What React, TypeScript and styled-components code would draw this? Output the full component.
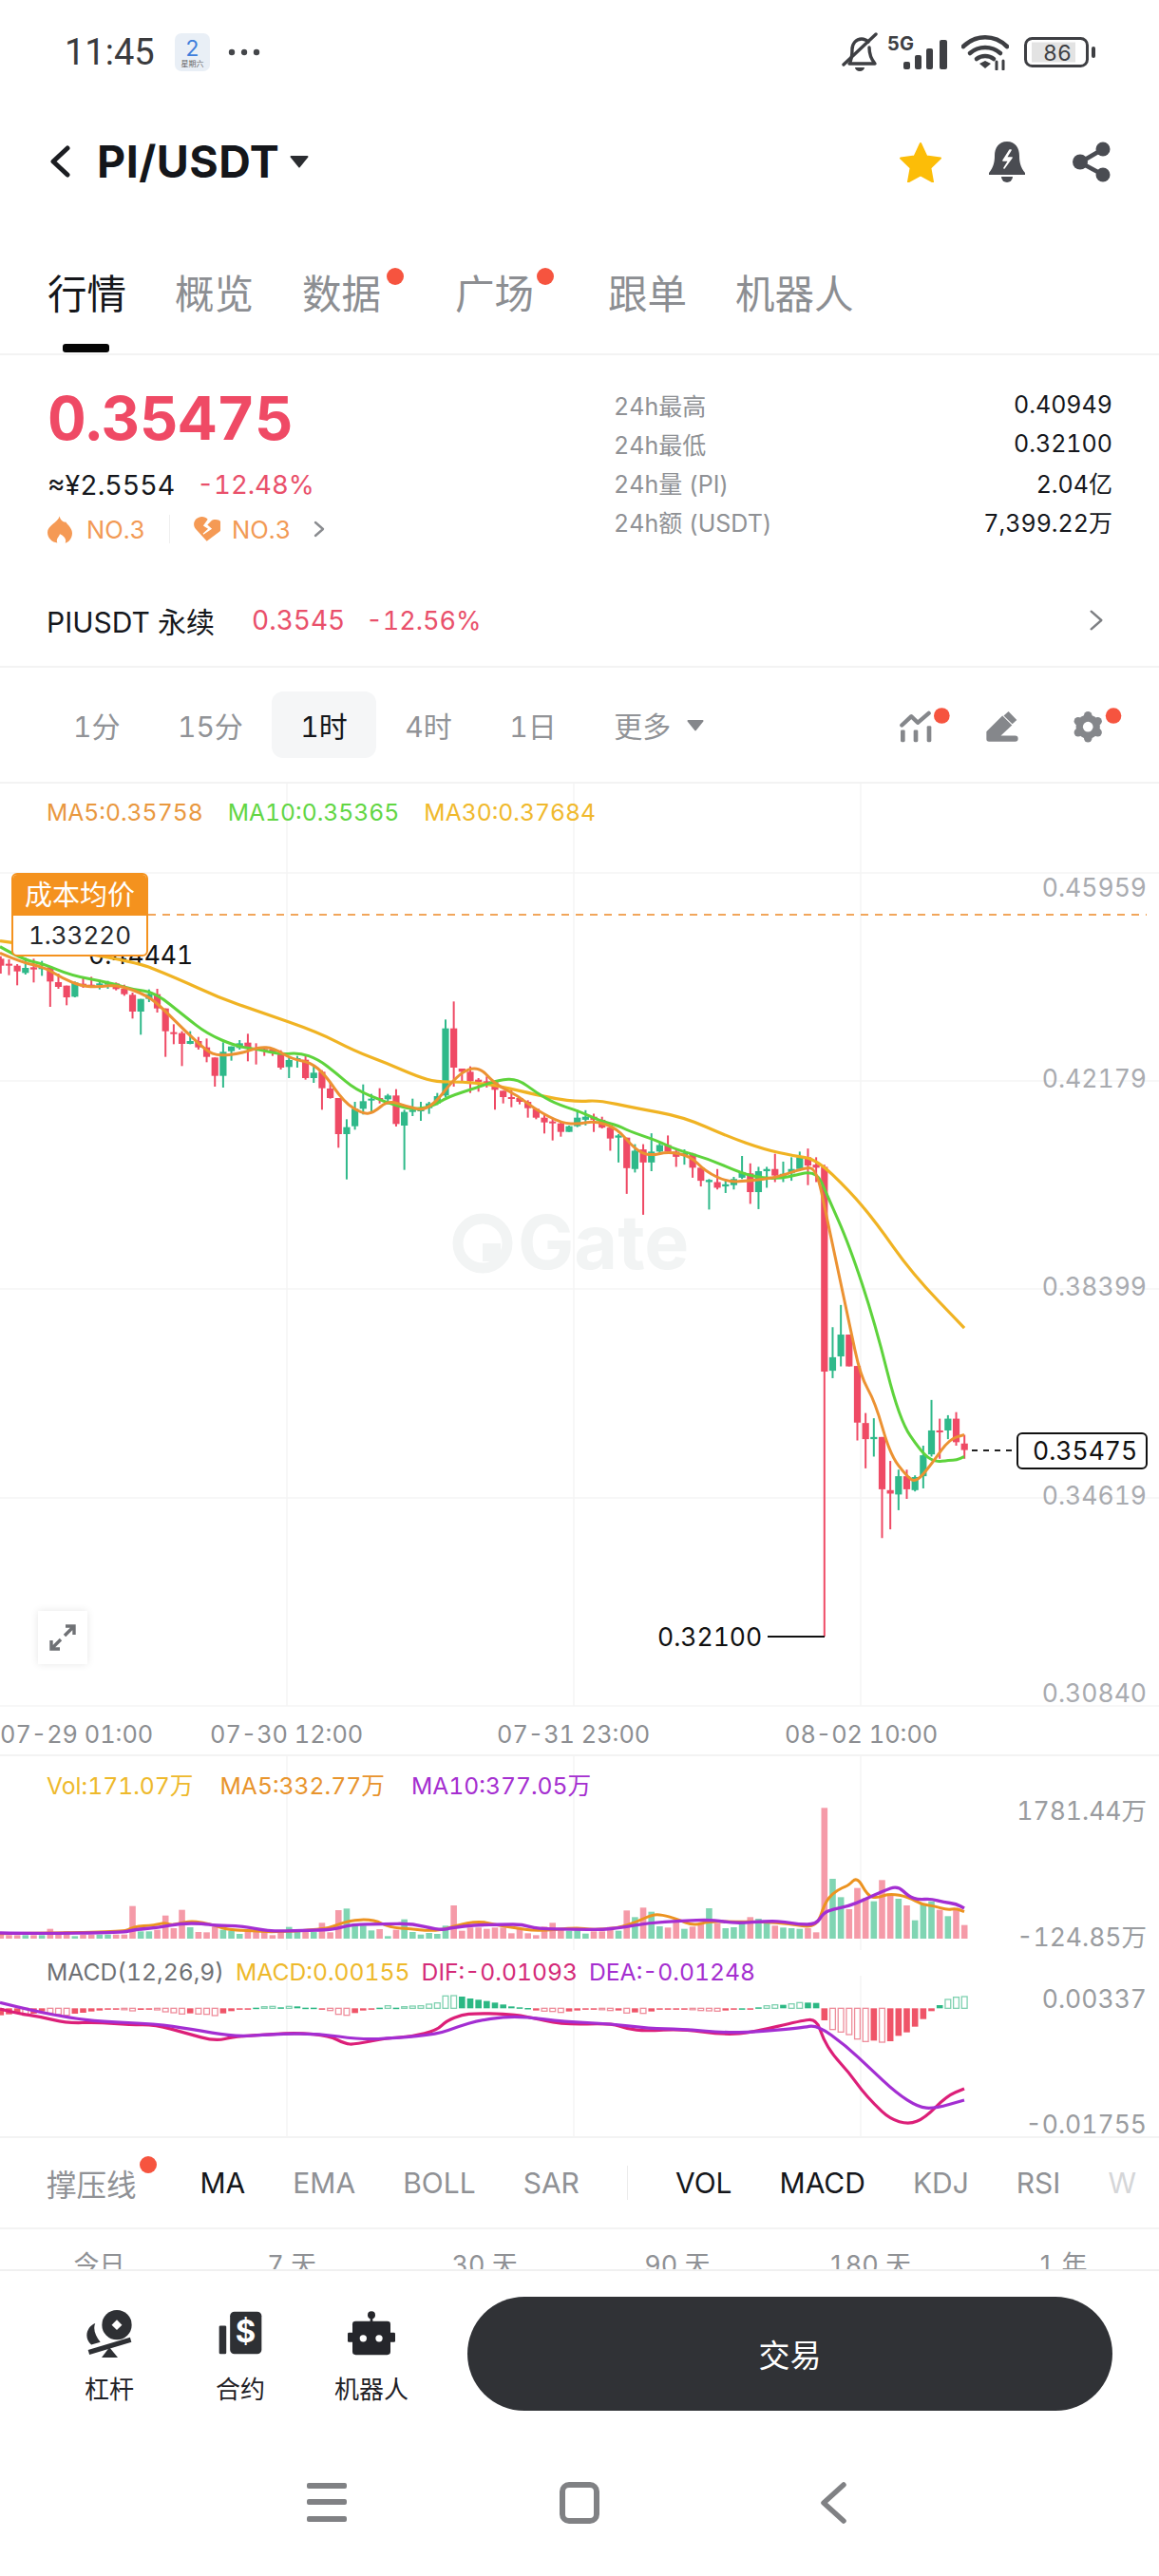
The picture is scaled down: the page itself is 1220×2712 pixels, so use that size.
import React from "react";
import styled, { createGlobalStyle } from "styled-components";

//-----------------------DATA-----------------------//

type Pt = [number, number];

// chart traces were read off two crops of the chart, so they keep the crop scale
const left = (x: number, y: number): Pt => [x / 2.57, 840 + y / 3];
const right = (x: number, y: number): Pt => [610 + x / 2.57, 1100 + y / 2.18];
const lower1 = (x: number, y: number): Pt => [x / 3, 1890 + y / 3];
const lower2 = (x: number, y: number): Pt => [510 + x / 3, 1890 + y / 3];

const candleX = (i: number) => 0.8 + 8.67 * i;

// [up, wickTop, wickBottom, bodyTop, bodyBottom]
const candlesLeft = [
  [0,500,555,508,530],[0,510,560,524,530],[0,525,592,530,548],[1,505,558,537,553],[0,508,583,535,542],[1,515,562,535,540],
  [0,535,660,535,580],[0,555,603,582,597],[0,593,655,593,630],[1,580,630,583,628],[0,570,600,587,595],[0,565,600,590,596],
  [1,575,605,586,592],[1,578,603,584,589],[0,583,608,586,604],[0,590,625,603,620],[0,615,697,622,675],[1,635,748,635,675],
  [1,605,645,620,635],[0,603,678,620,665],[0,665,818,665,737],[0,715,778,740,745],[0,737,847,743,777],[1,737,778,768,777],
  [0,755,795,768,788],[0,760,835,788,818],[0,820,912,820,878],[1,772,915,802,878],[1,785,830,785,800],[1,765,795,775,790],
  [0,745,832,773,792],[0,775,842,790,798],[0,787,815,793,800],[0,790,815,795,802],[0,797,858,805,852],[1,820,885,828,850],
  [1,815,852,822,828],[0,815,890,827,885],[1,845,900,868,885],[0,860,985,865,917],[0,900,950,918,948],[0,948,1105,948,1062],
  [1,1015,1205,1040,1062],[1,960,1048,982,1037],[1,905,1000,958,982],[1,935,990,950,956],[0,917,965,948,952],[1,935,968,940,952],
  [0,920,1038,940,1030],[1,985,1175,992,1035],[1,950,1005,985,992],[1,960,1020,980,990],[1,960,998,965,980],[1,932,970,942,965],
  [1,700,945,728,940],[0,643,912,728,852],[0,855,895,855,865],[0,848,932,865,895],[0,885,928,890,897],[0,880,915,895,900],
  [0,898,985,898,922],[0,925,965,925,945],[0,920,977,945,950],[0,945,968,948,960],[0,955,1010,960,980],[0,980,1015,982,1010],
  [0,1000,1060,1010,1025],[0,1012,1082,1022,1027],[0,1025,1070,1028,1055],[1,1035,1055,1037,1055],[1,985,1040,1010,1037],
];

const candlesRight = [
  [1,150,185,165,172],[0,158,200,165,172],[0,165,192,172,190],[0,185,243,190,215],[1,205,270,208,213],[0,213,342,213,283],
  [1,228,293,243,285],[0,228,390,240,270],[1,203,290,245,270],[1,225,250,230,245],[0,208,250,230,245],[0,240,280,245,257],
  [1,240,275,248,255],[0,248,305,250,282],[0,282,325,282,312],[1,308,378,310,315],[0,285,332,315,328],[1,310,340,320,325],
  [1,303,332,308,322],[1,255,308,292,305],[0,272,365,295,338],[1,280,377,290,338],[1,280,328,285,290],[0,250,315,285,300],
  [1,268,315,296,300],[1,258,312,285,295],[1,245,290,258,285],[0,238,322,258,277],[0,258,315,275,282],[0,275,1358,280,750],
  [1,648,765,717,748],[1,597,738,665,715],[0,665,738,665,738],[0,737,908,737,867],[0,845,972,868,905],[1,857,945,900,905],
  [0,900,1132,900,1020],[0,955,1112,1022,1030],[1,975,1068,990,1032],[0,975,1042,990,1020],[1,988,1025,992,1022],[1,920,1018,942,990],
  [1,815,945,885,940],[0,858,950,885,888],[1,850,905,858,885],[0,843,920,858,912],[0,895,950,915,930],
];

const ma30 = [
  ...[[0,452],[340,505],[480,570],[590,630],[700,675],[860,740],[960,800],[1050,840],[1130,880],[1180,897],[1250,897],[1330,905],[1430,932],[1500,950],[1568,960]].map(([x, y]) => left(x, y)),
  ...[[50,127],[150,145],[280,165],[400,210],[500,240],[580,255],[640,262],[730,335],[800,405],[900,525],[1041,650]].map(([x, y]) => right(x, y)),
];
const ma10 = [
  ...[[0,470],[60,510],[120,525],[190,560],[300,585],[360,605],[420,615],[500,690],[560,745],[640,785],[700,795],[760,810],[810,805],[860,825],[910,870],[960,920],[1040,960],[1110,985],[1170,975],[1210,945],[1290,915],[1350,890],[1400,887],[1450,930],[1500,965],[1568,990]].map(([x, y]) => left(x, y)),
  ...[[50,173],[110,187],[130,197],[210,220],[260,240],[350,262],[440,295],[500,307],[560,305],[640,287],[670,345],[730,460],[800,640],[865,860],[925,935],[960,958],[1000,953],[1020,953],[1041,945]].map(([x, y]) => right(x, y)),
];
const ma5 = [
  ...[[0,490],[60,520],[120,535],[170,570],[220,595],[270,597],[320,590],[400,625],[440,665],[500,735],[560,800],[590,815],[650,808],[700,787],[740,790],[790,825],[840,835],[880,875],[930,960],[980,998],[1010,995],[1050,955],[1100,975],[1160,990],[1240,870],[1295,847],[1340,905],[1400,940],[1450,985],[1520,1028],[1568,1030]].map(([x, y]) => left(x, y)),
  ...[[40,175],[100,190],[150,240],[190,255],[240,245],[300,255],[340,290],[400,315],[460,312],[530,305],[600,285],[640,280],[670,400],[730,640],[760,760],[800,820],[840,940],[885,990],[910,1005],[950,965],[1000,905],[1041,895]].map(([x, y]) => right(x, y)),
];

// bar tops, negative means a green bar
const volTops = [
  440,442,442,-442,442,-442,422,440,430,-445,440,440,-440,-440,440,440,350,-430,-430,425,380,420,362,-417,432,433,415,-425,-428,-438,
  428,428,430,442,432,-416,-432,432,-432,403,433,363,-358,-412,-412,-427,423,-445,425,-392,-432,-440,-435,-438,-412,348,428,418,418,422,
  418,418,436,422,436,442,415,403,425,-428,-425,-437,430,430,416,-428,364,-385,355,-368,-414,418,398,-422,415,405,-357,405,-420,-417,
  -405,385,-390,-405,412,-418,-420,-422,420,433,40,-264,-322,360,293,325,-335,268,315,-327,348,-395,-345,-335,362,-382,358,410,
];
const macdEnds = [
  695,692,690,695,690,683,688,692,695,690,687,683,680,676,676,677,681,678,676,678,684,687,691,689,691,692,696,689,682,676,
  674,671,668,667,670,667,667,671,671,675,680,692,695,688,680,675,671,665,671,668,666,665,660,656,634,633,636,642,646,650,
  655,661,667,670,672,680,682,683,686,683,680,677,675,677,680,680,688,686,689,683,677,676,675,674,677,680,681,682,680,677,
  673,677,670,665,662,662,659,655,655,656,711,740,748,756,770,778,775,780,777,760,749,731,707,682,663,645,638,636,
];

const volMa10 = [
  ...[[0,435],[100,437],[390,434],[420,425],[500,418],[570,405],[640,405],[680,412],[760,412],[850,430],[960,427],[1050,425],[1110,408],[1210,407],[1300,405],[1390,427],[1430,418],[1500,410]].map(([x, y]) => lower1(x, y)),
  ...[[60,408],[120,408],[165,422],[280,423],[370,425],[430,418],[520,403],[620,397],[720,393],[790,405],[900,397],[950,400],[990,408],[1048,408],[1070,372],[1100,360],[1150,350],[1200,330],[1260,302],[1305,286],[1340,320],[1370,330],[1410,327],[1450,338],[1490,343],[1515,357]].map(([x, y]) => lower2(x, y)),
];
const volMa5 = [
  ...[[0,437],[390,434],[420,415],[490,410],[520,402],[540,410],[570,405],[600,398],[640,402],[680,412],[720,425],[800,428],[850,432],[960,428],[1040,420],[1100,395],[1180,392],[1230,418],[1300,422],[1350,428],[1400,425],[1440,412],[1510,397]].map(([x, y]) => lower1(x, y)),
  ...[[30,408],[90,418],[165,430],[290,418],[340,425],[420,420],[480,400],[530,377],[560,377],[610,392],[660,412],[710,398],[790,400],[880,400],[960,405],[1048,420],[1075,340],[1100,310],[1130,292],[1150,285],[1177,257],[1210,318],[1240,325],[1280,310],[1340,322],[1380,345],[1420,350],[1460,362],[1490,358],[1515,368]].map(([x, y]) => lower2(x, y)),
];
const dif = [
  ...[[0,675],[60,690],[130,700],[210,720],[310,717],[410,725],[490,725],[590,752],[680,777],[740,762],[860,755],[940,750],[1040,760],[1090,785],[1120,787],[1220,767],[1300,763],[1380,742],[1410,712],[1460,693],[1500,689]].map(([x, y]) => lower1(x, y)),
  ...[[60,690],[130,698],[250,725],[400,720],[450,738],[510,745],[620,738],[760,757],[850,748],[1000,712],[1048,707],[1070,770],[1100,820],[1150,875],[1190,930],[1230,975],[1280,1022],[1340,1040],[1390,1020],[1460,950],[1515,927]].map(([x, y]) => lower2(x, y)),
];
const dea = [
  ...[[0,655],[100,680],[220,703],[320,715],[490,722],[600,738],[740,763],[860,755],[1000,752],[1140,772],[1250,767],[1380,755],[1450,730],[1510,712]].map(([x, y]) => lower1(x, y)),
  ...[[60,700],[130,700],[250,715],[400,722],[520,737],[620,738],[760,750],[850,748],[1000,735],[1050,725],[1140,790],[1220,865],[1300,940],[1370,985],[1420,990],[1515,963]].map(([x, y]) => lower2(x, y)),
];

const smooth = (pts: Pt[]) => {
  let d = `M${pts[0][0]} ${pts[0][1]}`;
  for (let i = 1; i < pts.length - 1; i++) {
    const mx = (pts[i][0] + pts[i + 1][0]) / 2;
    const my = (pts[i][1] + pts[i + 1][1]) / 2;
    d += `Q${pts[i][0]} ${pts[i][1]} ${mx} ${my}`;
  }
  const last = pts[pts.length - 1];
  return `${d}L${last[0]} ${last[1]}`;
};

const RED = "#ef4a65";
const GREEN = "#2fb98a";
const VERTICALS = [302, 604, 906];

//-----------------------STYLE-----------------------//

const FONT = `Inter, "Noto Sans CJK SC", sans-serif`;

const GlobalStyle = createGlobalStyle`
  html, body {
    margin: 0;
    padding: 0;
    background: #fff;
  }
  body {
    font-family: ${FONT};
    font-variant-numeric: tabular-nums;
  }
`;

const Page = styled.div`
  width: 1220px;
  height: 2712px;
  overflow: hidden;
  background: #fff;
  color: #15171c;
`;

const IconSlot = styled.span<{ $left?: number; $right?: number }>`
  flex: none;
  display: flex;
  align-items: center;
  margin-left: ${(p) => p.$left ?? 0}px;
  margin-right: ${(p) => p.$right ?? 0}px;
`;

const StatusBar = styled.div`
  height: 110px;
  box-sizing: border-box;
  padding: 0 66px 0 68px;
  display: flex;
  align-items: center;
  justify-content: space-between;
`;

const StatusLeft = styled.div`
  display: flex;
  align-items: center;
`;

const Clock = styled.span`
  font-family: Roboto, sans-serif;
  font-size: 38px;
  color: #3a3b3e;
  width: 116px;
`;

const StatusRight = styled.div`
  display: flex;
  align-items: center;
`;

const Header = styled.div`
  height: 120px;
  box-sizing: border-box;
  padding: 0 50px 0 52px;
  display: flex;
  align-items: center;
`;

const Symbol = styled.span`
  font-size: 46.5px;
  font-weight: 700;
  letter-spacing: 0.5px;
  margin: 0 11px 0 27px;
  color: #14161a;
`;

const HeaderIcons = styled.div`
  margin-left: auto;
  display: flex;
  align-items: center;
  gap: 49px;
`;

const Tabs = styled.div`
  height: 144px;
  box-sizing: border-box;
  padding: 56px 0 0 50px;
  display: flex;
  gap: 51px;
  border-bottom: 2px solid #f3f3f3;
`;

const Tab = styled.div<{ $active?: boolean; $dot?: boolean }>`
  position: relative;
  font-size: 41.5px;
  line-height: 48px;
  height: 48px;
  margin-right: ${(p) => (p.$dot ? "27px" : "0")};
  color: ${(p) => (p.$active ? "#14161a" : "#8c8e92")};
`;

const TabMark = styled.span`
  position: absolute;
  left: 16px;
  top: 76px;
  width: 49px;
  height: 9px;
  border-radius: 3px;
  background: #050505;
`;

const Dot = styled.span<{ $left: number; $top: number }>`
  position: absolute;
  left: ${(p) => p.$left}px;
  top: ${(p) => p.$top}px;
  width: 18px;
  height: 18px;
  border-radius: 50%;
  background: #f6543f;
`;

const Summary = styled.div`
  height: 327px;
  border-bottom: 2px solid #f3f3f3;
`;

const SummaryTop = styled.div`
  height: 231px;
  box-sizing: border-box;
  padding: 26px 49px 0 50px;
  display: flex;
  justify-content: space-between;
`;

const PriceCol = styled.div`
  display: flex;
  flex-direction: column;
`;

const Price = styled.div`
  font-size: 63px;
  font-weight: 700;
  line-height: 80px;
  letter-spacing: -0.4px;
  color: ${RED};
`;

const SubRow = styled.div`
  height: 56px;
  margin-top: 2px;
  display: flex;
  align-items: center;
  gap: 23px;
  font-size: 28.5px;
`;

const Change = styled.span`
  font-size: 27.5px;
  color: #e9506b;
`;

const RankRow = styled.div`
  height: 38px;
  display: flex;
  align-items: center;
  font-size: 25.5px;
  color: #f29a55;
`;

const RankDivider = styled.span`
  width: 1px;
  height: 30px;
  margin: 0 25px;
  background: #efefef;
`;

const StatsCol = styled.div`
  width: 525px;
  padding-top: 5px;
`;

const StatRow = styled.div`
  height: 41px;
  display: flex;
  align-items: center;
  justify-content: space-between;
  font-size: 25px;
`;

const StatLabel = styled.span`
  color: #8f9195;
`;

const PerpRow = styled.div`
  height: 96px;
  box-sizing: border-box;
  padding: 0 58px 0 49px;
  display: flex;
  align-items: center;
  font-size: 30px;
`;

const PerpPrice = styled.span`
  font-size: 28px;
  color: #e9506b;
  margin-left: 39px;
`;

const PerpChange = styled.span`
  font-size: 27px;
  color: #e9506b;
  margin-left: 22px;
  margin-right: auto;
`;

const Timeframes = styled.div`
  height: 122px;
  box-sizing: border-box;
  padding: 0 38px 0 47px;
  display: flex;
  align-items: center;
  gap: 0.5px;
  border-bottom: 2px solid #f3f3f3;
`;

const Timeframe = styled.div<{ $active?: boolean }>`
  height: 70px;
  padding: 0 30px;
  display: flex;
  align-items: center;
  font-size: 30px;
  border-radius: 12px;
  color: ${(p) => (p.$active ? "#14161a" : "#919397")};
  background: ${(p) => (p.$active ? "#f5f6f7" : "transparent")};
`;

const ToolIcons = styled.div`
  margin-left: auto;
  display: flex;
  align-items: center;
`;

const Pane = styled.div<{ $height: number; $line?: boolean }>`
  position: relative;
  height: ${(p) => p.$height}px;
  box-sizing: content-box;
  border-bottom: ${(p) => (p.$line ? "2px solid #f3f3f3" : "none")};
`;

const ChartSvg = styled.svg`
  display: block;
  width: 1220px;
  height: 100%;
`;

const AxisText = styled.text<{ $color?: string; $size?: number }>`
  font-family: ${FONT};
  font-size: ${(p) => p.$size ?? 26.5}px;
  fill: ${(p) => p.$color ?? "#a9abb0"};
`;

const Legend = styled.div<{ $top: number; $gap: number }>`
  position: absolute;
  left: 49px;
  top: ${(p) => p.$top}px;
  display: flex;
  gap: ${(p) => p.$gap}px;
  font-size: 24.7px;
  line-height: 30px;
`;

const LegendItem = styled.span<{ $color: string }>`
  color: ${(p) => p.$color};
`;

const CostTag = styled.div`
  position: absolute;
  left: 12px;
  top: 94px;
  width: 144px;
  box-sizing: border-box;
  border: 2px solid #f4921e;
  border-radius: 6px;
  background: #fff;
  overflow: hidden;
  text-align: center;
`;

const CostTitle = styled.div`
  height: 43px;
  line-height: 43px;
  font-size: 29px;
  color: #fff;
  background: #f4921e;
`;

const CostValue = styled.div`
  height: 41px;
  line-height: 41px;
  font-size: 26px;
  color: #25272b;
`;

const ExpandButton = styled.div`
  position: absolute;
  left: 40px;
  top: 871px;
  width: 52px;
  height: 56px;
  display: flex;
  align-items: center;
  justify-content: center;
  background: #fff;
  box-shadow: 0 0 8px rgba(0, 0, 0, 0.1);
`;

const Indicators = styled.div`
  height: 96px;
  box-sizing: border-box;
  padding-left: 49px;
  display: flex;
  align-items: center;
  gap: 50px;
  overflow: hidden;
  border-bottom: 2px solid #f3f3f3;
`;

const Indicator = styled.div<{ $on?: boolean; $faded?: boolean }>`
  flex: none;
  font-size: 30px;
  color: ${(p) => (p.$on ? "#14161a" : p.$faded ? "#d5d6d8" : "#8f9195")};
`;

const SupportTab = styled.div`
  position: relative;
  flex: none;
  font-size: 31.5px;
  margin-right: 17px;
  color: #8f9195;
`;

const IndicatorDivider = styled.span`
  flex: none;
  width: 1px;
  height: 36px;
  background: #ececec;
`;

const Periods = styled.div`
  height: 42px;
  box-sizing: content-box;
  padding-left: 3px;
  display: grid;
  grid-template-columns: repeat(6, 1fr);
  overflow: hidden;
  border-bottom: 2px solid #f0f0f0;
`;

const Period = styled.div`
  padding-top: 20px;
  font-size: 27px;
  line-height: 36px;
  text-align: center;
  color: #8f9195;
`;

const ActionBar = styled.div`
  height: 120px;
  margin-top: 27px;
  padding: 0 49px 0 46px;
  display: flex;
`;

const Action = styled.div`
  width: 138px;
  display: flex;
  flex-direction: column;
  align-items: center;
  padding-top: 10px;
  box-sizing: border-box;
`;

const ActionIcon = styled.div`
  height: 56px;
  display: flex;
  align-items: center;
`;

const ActionLabel = styled.div`
  margin-top: 15px;
  font-size: 26px;
  line-height: 34px;
  color: #1f2126;
`;

const TradeButton = styled.div`
  flex: 1;
  margin-left: 32px;
  border-radius: 60px;
  background: #303236;
  color: #fff;
  font-size: 33px;
  display: flex;
  align-items: center;
  justify-content: center;
`;

const NavBar = styled.div`
  padding: 75px 0 0 323px;
  display: flex;
  align-items: center;
`;

//-----------------------ICONS-----------------------//

const CalendarIcon = () => (
  <svg width="37" height="40" viewBox="0 0 37 40">
    <rect width="37" height="40" rx="7" fill="#e9eff6" />
    <AxisText x="18.5" y="24" textAnchor="middle" $size={23} $color="#3f7fdc">2</AxisText>
    <AxisText x="18.5" y="35" textAnchor="middle" $size={8} $color="#666">星期六</AxisText>
  </svg>
);

const MoreDots = () => (
  <svg width="34" height="8" viewBox="0 0 34 8">
    <circle cx="4" cy="4" r="3.2" fill="#44464a" />
    <circle cx="17" cy="4" r="3.2" fill="#44464a" />
    <circle cx="30" cy="4" r="3.2" fill="#44464a" />
  </svg>
);

const MutedBell = () => (
  <svg width="38" height="42" viewBox="0 0 38 42" fill="none" stroke="#3e3f43" strokeWidth="3.4" strokeLinecap="round" strokeLinejoin="round">
    <path d="M9 31c2-5 2-9 2-13 0-6 4-11 10-11 3 0 5 1 7 3M29 16c0 6 1 11 6 17H8" />
    <path d="M36 2 2 34" />
    <path d="M14 37h10a5 4 0 0 1-10 0z" fill="#3e3f43" stroke="none" />
  </svg>
);

const SignalIcon = () => (
  <svg width="66" height="38" viewBox="0 0 66 38">
    <AxisText x="0" y="17" $size={20} $color="#3e3f43" fontWeight="700">5G</AxisText>
    <rect x="17" y="29" width="7" height="8" rx="2" fill="#3e3f43" />
    <rect x="29" y="22" width="7" height="15" rx="2" fill="#3e3f43" />
    <rect x="41" y="15" width="7" height="22" rx="2" fill="#3e3f43" />
    <rect x="55" y="6" width="8" height="31" rx="2" fill="#3e3f43" />
  </svg>
);

const WifiIcon = () => (
  <svg width="50" height="38" viewBox="0 0 50 38" fill="none" stroke="#3e3f43" strokeWidth="4.6" strokeLinecap="round">
    <path d="M2 13C15 0 35 0 48 13" />
    <path d="M9 20c9-8 23-8 32 0" />
    <path d="M16 26c5-4 13-4 18 0" />
    <path d="M19 31l6-3 6 3-6 5z" fill="#3e3f43" stroke="none" />
    <path d="M37 37v-8M44 37v-9" strokeWidth="3" />
  </svg>
);

const BatteryIcon = () => (
  <svg width="76" height="32" viewBox="0 0 76 32">
    <rect x="1.5" y="1.5" width="65" height="29" rx="7" fill="#fff" stroke="#3e3f43" strokeWidth="3" />
    <rect x="8" y="5.5" width="46" height="21" fill="#e3e3e3" />
    <rect x="71" y="10" width="4" height="12" rx="2" fill="#3e3f43" />
    <AxisText x="35" y="25" textAnchor="middle" $size={23} $color="#3e3f43" fontFamily="Roboto">86</AxisText>
  </svg>
);

const BackIcon = () => (
  <svg width="23" height="34" viewBox="0 0 23 34" fill="none" stroke="#1b1d21" strokeWidth="5" strokeLinecap="round" strokeLinejoin="round">
    <path d="M19 3 4 17l15 14" />
  </svg>
);

const Caret = ({ w, h, color }: { w: number; h: number; color: string }) => (
  <svg width={w} height={h} viewBox="0 0 20 14">
    <path d="M1.5 1h17a1 1 0 0 1 .8 1.6L10.8 13a1 1 0 0 1-1.6 0L.7 2.6A1 1 0 0 1 1.5 1z" fill={color} />
  </svg>
);

const StarIcon = () => (
  <svg width="46" height="43" viewBox="0 0 46 43">
    <path d="M23 2l6.4 13.6 14.6 2-10.6 10.3 2.6 14.6L23 35.4l-13 7.1 2.6-14.6L2 17.6l14.6-2z" fill="#fcbd08" stroke="#fcbd08" strokeWidth="2" strokeLinejoin="round" />
  </svg>
);

const AlertBell = () => (
  <svg width="38" height="43" viewBox="0 0 38 43">
    <path d="M19 0C10 0 6 7 6 15c0 6-1 12-6 18v2h38v-2c-5-6-6-12-6-18C32 7 28 0 19 0z" fill="#4a4c52" />
    <path d="M22 9l-7 11h6l-5 8 8-11h-6l5-8z" fill="#fff" stroke="#fff" strokeWidth="1.6" strokeLinejoin="round" />
    <path d="M13 37h12a6 6 0 0 1-12 0z" fill="#4a4c52" />
  </svg>
);

const ShareIcon = () => (
  <svg width="42" height="43" viewBox="0 0 42 43" fill="#4a4c52" stroke="#4a4c52">
    <path d="M33 8 9 22l24 13" fill="none" strokeWidth="4.6" />
    <circle cx="33" cy="8" r="7.5" stroke="none" />
    <circle cx="9" cy="21.5" r="8" stroke="none" />
    <circle cx="33" cy="35" r="7.5" stroke="none" />
  </svg>
);

const FlameIcon = () => (
  <svg width="26" height="29" viewBox="30 25 78 84">
    <path d="M68 25c3 14 14 20 20 18 1 5 20 18 20 35 0 18-14 31-22 31 4-8 1-20-17-28-3 10-13 15-8 28-16-2-31-14-31-33 0-22 32-30 38-51z" fill="#f59a55" />
  </svg>
);

const HeartIcon = () => (
  <svg width="28" height="26" viewBox="488 28 82 76">
    <path d="M528 103 494 66c-14-17 0-38 19-38 8 0 13 3 18 8l-14 20 15 9-16 15 2 3 26-18-14-12 14-14c5-2 8-2 12-2 19 0 24 20 12 36z" fill="#f59a55" />
  </svg>
);

const Chevron = ({ w, h, color, sw }: { w: number; h: number; color: string; sw: number }) => (
  <svg width={w} height={h} viewBox="0 0 12 18" fill="none" stroke={color} strokeWidth={sw} strokeLinecap="round" strokeLinejoin="round">
    <path d="M2 2l8 7-8 7" />
  </svg>
);

const IndicatorTool = () => (
  <svg width="55" height="37" viewBox="45 25 165 110">
    <path d="M55 80 85 52l20 20 35-30" fill="none" stroke="#85878b" strokeWidth="13" strokeLinecap="round" strokeLinejoin="round" />
    <rect x="51" y="95" width="14" height="38" rx="4" fill="#85878b" />
    <rect x="92" y="95" width="14" height="38" rx="4" fill="#85878b" />
    <rect x="134" y="82" width="14" height="51" rx="4" fill="#85878b" />
    <circle cx="181" cy="50" r="25" fill="#f6543f" />
  </svg>
);

const PenTool = () => (
  <svg width="37" height="37" viewBox="315 25 110 110">
    <path d="M322 100l50-50 30 30-35 33h45a8 8 0 0 1 0 18h-82a8 8 0 0 1-8-8z" fill="#85878b" />
    <path d="M376 50l15-13 26 27-14 12z" fill="#85878b" />
  </svg>
);

const GEAR_LOBES = [0, 60, 120, 180, 240, 300];

const GearTool = () => (
  <svg width="53" height="37" viewBox="595 25 160 110">
    <circle cx="644" cy="85" r="38" fill="#85878b" />
    {GEAR_LOBES.map((deg) => (
      <circle
        key={deg}
        cx={644 + 36 * Math.sin((deg * Math.PI) / 180)}
        cy={85 - 36 * Math.cos((deg * Math.PI) / 180)}
        r="13"
        fill="#85878b"
      />
    ))}
    <circle cx="644" cy="85" r="16" fill="#fff" />
    <circle cx="725" cy="50" r="25" fill="#f6543f" />
  </svg>
);

const ExpandIcon = () => (
  <svg width="28" height="28" viewBox="0 0 28 28" fill="none" stroke="#6f7175" strokeWidth="3.4">
    <path d="M16 12 26 2M17 2h9v9M12 16 2 26M11 26H2v-9" />
  </svg>
);

const LeverIcon = () => (
  <svg width="50" height="53" viewBox="60 35 147 152">
    <path d="M90 80c-24 8-38 44-12 66l28-8c-14-18-24-38-16-58z" fill="#2e3034" />
    <circle cx="157" cy="85" r="46" fill="#2e3034" />
    <path d="M157 69l16 16-16 16-16-16z" fill="#fff" />
    <path d="M70 170 200 131" stroke="#2e3034" strokeWidth="15" />
    <path d="M110 186l24-32 26 32z" fill="#2e3034" />
  </svg>
);

const ContractIcon = () => (
  <svg width="46" height="46" viewBox="478 40 140 140">
    <rect x="480" y="87" width="23" height="91" rx="4" fill="#2e3034" />
    <rect x="515" y="42" width="101" height="136" rx="14" fill="#2e3034" />
    <AxisText x="565" y="139" textAnchor="middle" $size={100} $color="#fff" fontWeight="700">$</AxisText>
  </svg>
);

const RobotIcon = () => (
  <svg width="50" height="47" viewBox="885 30 150 140">
    <circle cx="960" cy="42" r="12" fill="#25262b" />
    <rect x="956" y="46" width="8" height="20" fill="#25262b" />
    <rect x="900" y="62" width="120" height="106" rx="10" fill="#25262b" />
    <rect x="885" y="98" width="18" height="30" rx="4" fill="#25262b" />
    <rect x="1017" y="98" width="18" height="30" rx="4" fill="#25262b" />
    <circle cx="934" cy="116" r="11" fill="#fff" />
    <circle cx="984" cy="116" r="11" fill="#fff" />
  </svg>
);

const MenuKey = () => (
  <svg width="42" height="42" viewBox="0 0 42 42" fill="#808184">
    <rect y="0" width="42" height="6" rx="2" />
    <rect y="17" width="42" height="6" rx="2" />
    <rect y="35" width="42" height="6" rx="2" />
  </svg>
);

const HomeKey = () => (
  <svg width="42" height="44" viewBox="0 0 42 44">
    <rect x="3" y="3" width="36" height="38" rx="7" fill="none" stroke="#808184" strokeWidth="6" />
  </svg>
);

const BackKey = () => (
  <svg width="28" height="44" viewBox="0 0 28 44">
    <path d="M25 3 4 22l21 19" fill="none" stroke="#808184" strokeWidth="5.5" strokeLinecap="round" strokeLinejoin="round" />
  </svg>
);

//-----------------------CHARTS-----------------------//

const GridVerticals = ({ y1, y2 }: { y1: number; y2: number }) => (
  <>
    {VERTICALS.map((x) => (
      <line key={x} x1={x} x2={x} y1={y1} y2={y2} stroke="#f4f4f4" strokeWidth="1.5" />
    ))}
  </>
);

const Candle = ({ i, c, y }: { i: number; c: number[]; y: (v: number) => number }) => {
  const x = candleX(i);
  const color = c[0] ? GREEN : RED;
  return (
    <g>
      <line x1={x} x2={x} y1={y(c[1])} y2={y(c[2])} stroke={color} strokeWidth="2" />
      <rect x={x - 3.6} y={y(c[3])} width="7.2" height={Math.max(y(c[4]) - y(c[3]), 2)} fill={color} />
    </g>
  );
};

const PRICE_LABELS = [
  { y: 935, t: "0.45959" },
  { y: 1136, t: "0.42179" },
  { y: 1355, t: "0.38399" },
  { y: 1575, t: "0.34619" },
  { y: 1783, t: "0.30840" },
];

const DATES = [
  { x: 0, t: "07-29 01:00" },
  { x: 221, t: "07-30 12:00" },
  { x: 523, t: "07-31 23:00" },
  { x: 826, t: "08-02 10:00" },
];

const PriceChart = () => (
  <ChartSvg viewBox="0 825 1220 1022">
    <GridVerticals y1={825} y2={1796} />
    {[919, 1138, 1357, 1577, 1796].map((y) => (
      <line key={y} x1="0" x2="1220" y1={y} y2={y} stroke="#f4f4f4" strokeWidth="1.5" />
    ))}
    <g fill="#f2f4f4">
      <circle cx="508" cy="1309" r="26" fill="none" stroke="#f2f4f4" strokeWidth="11" />
      <rect x="508" y="1309" width="19" height="19" />
      <text x="545" y="1336" fontFamily="Inter" fontWeight="700" fontSize="79">Gate</text>
    </g>
    {PRICE_LABELS.map((l) => (
      <AxisText key={l.t} x="1207" y={l.y + 9} textAnchor="end">{l.t}</AxisText>
    ))}
    {DATES.map((d) => (
      <AxisText key={d.t} x={d.x} y="1835" $size={25.3} $color="#8c8e92">{d.t}</AxisText>
    ))}
    <line x1="156" x2="1207" y1="963" y2="963" stroke="#f1a65c" strokeWidth="2" strokeDasharray="8 7" />
    <AxisText x="93" y="1015" $color="#111">0.44441</AxisText>
    {candlesLeft.map((c, i) => (
      <Candle key={i} i={i} c={c} y={(v) => 840 + v / 3} />
    ))}
    {candlesRight.map((c, i) => (
      <Candle key={i} i={i + 71} c={c} y={(v) => 1100 + v / 2.18} />
    ))}
    <path d={smooth(ma30)} fill="none" stroke="#f0b323" strokeWidth="3.2" />
    <path d={smooth(ma10)} fill="none" stroke="#5ed33c" strokeWidth="3" />
    <path d={smooth(ma5)} fill="none" stroke="#ec9232" strokeWidth="3" />
    <line x1="808" x2="868" y1="1723" y2="1723" stroke="#111" strokeWidth="2" />
    <AxisText x="692" y="1733" $color="#111">0.32100</AxisText>
    <line x1="1023" x2="1066" y1="1527" y2="1527" stroke="#222" strokeWidth="2" strokeDasharray="6 6" />
    <rect x="1071" y="1509" width="136" height="37" rx="5" fill="#fff" stroke="#111" strokeWidth="2" />
    <AxisText x="1087" y="1537" $color="#111">0.35475</AxisText>
  </ChartSvg>
);

const VolumeChart = () => (
  <ChartSvg viewBox="0 1849 1220 204">
    <GridVerticals y1={1849} y2={2053} />
    <AxisText x="1207" y="1916" textAnchor="end" $color="#9a9ca0">1781.44万</AxisText>
    <AxisText x="1207" y="2049" textAnchor="end" $color="#9a9ca0">-124.85万</AxisText>
    {volTops.map((t, i) => {
      const top = 1890 + Math.abs(t) / 3;
      return (
        <rect key={i} x={candleX(i) - 3.3} y={top} width="6.6" height={2041 - top} fill={t < 0 ? "#80d5b3" : "#f59aa8"} />
      );
    })}
    <path d={smooth(volMa5)} fill="none" stroke="#ec9320" strokeWidth="3" />
    <path d={smooth(volMa10)} fill="none" stroke="#a32ed2" strokeWidth="3.4" />
  </ChartSvg>
);

const MacdBar = ({ i }: { i: number }) => {
  const zero = 673;
  const v = macdEnds[i] - zero;
  const prev = i > 0 ? macdEnds[i - 1] - zero : v;
  const sameSide = v * prev > 0;
  const hollow = sameSide && Math.abs(v) > Math.abs(prev);
  const isRed = v > 0;
  const y1 = 1890 + Math.min(macdEnds[i], zero) / 3;
  const h = Math.max(Math.abs(v) / 3, 1.5);
  if (hollow) {
    return (
      <rect x={candleX(i) - 2.9} y={y1} width="5.8" height={h} fill="#fff" stroke={isRed ? "#ee8d9b" : "#7fd1b0"} strokeWidth="1.3" />
    );
  }
  return <rect x={candleX(i) - 3.3} y={y1} width="6.6" height={h} fill={isRed ? "#ef5468" : "#2cb884"} />;
};

const MacdChart = () => (
  <ChartSvg viewBox="0 2053 1220 196">
    <GridVerticals y1={2080} y2={2249} />
    <AxisText x="1207" y="2114" textAnchor="end" $color="#9a9ca0">0.00337</AxisText>
    <AxisText x="1207" y="2246" textAnchor="end" $color="#9a9ca0">-0.01755</AxisText>
    {macdEnds.map((_, i) => (
      <MacdBar key={i} i={i} />
    ))}
    <path d={smooth(dif)} fill="none" stroke="#dc1f78" strokeWidth="3.2" />
    <path d={smooth(dea)} fill="none" stroke="#a32ed2" strokeWidth="3.2" />
  </ChartSvg>
);

//-----------------------COMPONENT-----------------------//

const STATS = [
  { label: "24h最高", value: "0.40949" },
  { label: "24h最低", value: "0.32100" },
  { label: "24h量 (PI)", value: "2.04亿" },
  { label: "24h额 (USDT)", value: "7,399.22万" },
];

const App = () => {
  return (
    <Page>
      <GlobalStyle />
      <StatusBar>
        <StatusLeft>
          <Clock>11:45</Clock>
          <CalendarIcon />
          <IconSlot $left={19}>
            <MoreDots />
          </IconSlot>
        </StatusLeft>
        <StatusRight>
          <MutedBell />
          <IconSlot $left={10}>
            <SignalIcon />
          </IconSlot>
          <IconSlot $left={12}>
            <WifiIcon />
          </IconSlot>
          <IconSlot $left={16}>
            <BatteryIcon />
          </IconSlot>
        </StatusRight>
      </StatusBar>

      <Header>
        <BackIcon />
        <Symbol>PI/USDT</Symbol>
        <Caret w={20} h={14} color="#2a2c30" />
        <HeaderIcons>
          <StarIcon />
          <AlertBell />
          <ShareIcon />
        </HeaderIcons>
      </Header>

      <Tabs>
        <Tab $active>
          行情
          <TabMark />
        </Tab>
        <Tab>概览</Tab>
        <Tab $dot>
          数据
          <Dot $left={89} $top={-4} />
        </Tab>
        <Tab $dot>
          广场
          <Dot $left={86} $top={-4} />
        </Tab>
        <Tab>跟单</Tab>
        <Tab>机器人</Tab>
      </Tabs>

      <Summary>
        <SummaryTop>
          <PriceCol>
            <Price>0.35475</Price>
            <SubRow>
              <span>≈¥2.5554</span>
              <Change>-12.48%</Change>
            </SubRow>
            <RankRow>
              <IconSlot $right={15}>
                <FlameIcon />
              </IconSlot>
              NO.3
              <RankDivider />
              <IconSlot $right={12}>
                <HeartIcon />
              </IconSlot>
              NO.3
              <IconSlot $left={24}>
                <Chevron w={12} h={18} color="#8a8c90" sw={2.4} />
              </IconSlot>
            </RankRow>
          </PriceCol>
          <StatsCol>
            {STATS.map((s) => (
              <StatRow key={s.label}>
                <StatLabel>{s.label}</StatLabel>
                <span>{s.value}</span>
              </StatRow>
            ))}
          </StatsCol>
        </SummaryTop>
        <PerpRow>
          PIUSDT 永续
          <PerpPrice>0.3545</PerpPrice>
          <PerpChange>-12.56%</PerpChange>
          <Chevron w={16} h={28} color="#7d7f83" sw={1.8} />
        </PerpRow>
      </Summary>

      <Timeframes>
        <Timeframe>1分</Timeframe>
        <Timeframe>15分</Timeframe>
        <Timeframe $active>1时</Timeframe>
        <Timeframe>4时</Timeframe>
        <Timeframe>1日</Timeframe>
        <Timeframe>
          更多
          <IconSlot $left={17}>
            <Caret w={18} h={13} color="#85878b" />
          </IconSlot>
        </Timeframe>
        <ToolIcons>
          <IndicatorTool />
          <IconSlot $left={35}>
            <PenTool />
          </IconSlot>
          <IconSlot $left={56}>
            <GearTool />
          </IconSlot>
        </ToolIcons>
      </Timeframes>

      <Pane $height={1022} $line>
        <PriceChart />
        <Legend $top={15} $gap={26}>
          <LegendItem $color="#e9983f">MA5:0.35758</LegendItem>
          <LegendItem $color="#62d644">MA10:0.35365</LegendItem>
          <LegendItem $color="#f0b92d">MA30:0.37684</LegendItem>
        </Legend>
        <CostTag>
          <CostTitle>成本均价</CostTitle>
          <CostValue>1.33220</CostValue>
        </CostTag>
        <ExpandButton>
          <ExpandIcon />
        </ExpandButton>
      </Pane>

      <Pane $height={204}>
        <VolumeChart />
        <Legend $top={16} $gap={28}>
          <LegendItem $color="#eeb92c">Vol:171.07万</LegendItem>
          <LegendItem $color="#e8942d">MA5:332.77万</LegendItem>
          <LegendItem $color="#a52fd0">MA10:377.05万</LegendItem>
        </Legend>
      </Pane>

      <Pane $height={196} $line>
        <MacdChart />
        <Legend $top={8} $gap={12}>
          <LegendItem $color="#6e7074">MACD(12,26,9)</LegendItem>
          <LegendItem $color="#eeb92c">MACD:0.00155</LegendItem>
          <LegendItem $color="#d42a78">DIF:-0.01093</LegendItem>
          <LegendItem $color="#a52fd0">DEA:-0.01248</LegendItem>
        </Legend>
      </Pane>

      <Indicators>
        <SupportTab>
          撑压线
          <Dot $left={98} $top={-5} />
        </SupportTab>
        <Indicator $on>MA</Indicator>
        <Indicator>EMA</Indicator>
        <Indicator>BOLL</Indicator>
        <Indicator>SAR</Indicator>
        <IndicatorDivider />
        <Indicator $on>VOL</Indicator>
        <Indicator $on>MACD</Indicator>
        <Indicator>KDJ</Indicator>
        <Indicator>RSI</Indicator>
        <Indicator $faded>W</Indicator>
      </Indicators>

      <Periods>
        <Period>今日</Period>
        <Period>7 天</Period>
        <Period>30 天</Period>
        <Period>90 天</Period>
        <Period>180 天</Period>
        <Period>1 年</Period>
      </Periods>

      <ActionBar>
        <Action>
          <ActionIcon>
            <LeverIcon />
          </ActionIcon>
          <ActionLabel>杠杆</ActionLabel>
        </Action>
        <Action>
          <ActionIcon>
            <ContractIcon />
          </ActionIcon>
          <ActionLabel>合约</ActionLabel>
        </Action>
        <Action>
          <ActionIcon>
            <RobotIcon />
          </ActionIcon>
          <ActionLabel>机器人</ActionLabel>
        </Action>
        <TradeButton>交易</TradeButton>
      </ActionBar>

      <NavBar>
        <MenuKey />
        <IconSlot $left={224}>
          <HomeKey />
        </IconSlot>
        <IconSlot $left={232}>
          <BackKey />
        </IconSlot>
      </NavBar>
    </Page>
  );
};

export default App;
